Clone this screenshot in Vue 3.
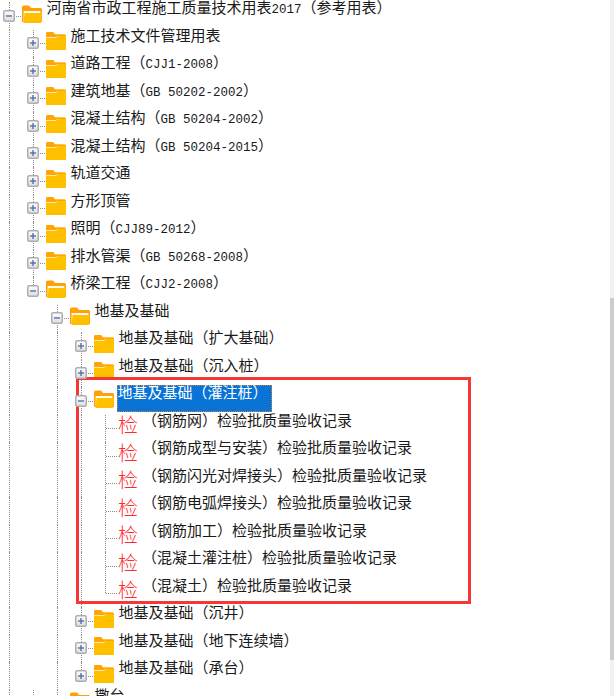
<script setup>
const nodes = [
  { t: '河南省市政工程施工质量技术用表2017（参考用表）', guides: [], toggle: 'minus', open: true, cont: true },
  ...[
    '施工技术文件管理用表', '道路工程（CJJ1-2008）', '建筑地基（GB 50202-2002）', '混凝土结构（GB 50204-2002）',
    '混凝土结构（GB 50204-2015）', '轨道交通', '方形顶管', '照明（CJJ89-2012）', '排水管渠（GB 50268-2008）'
  ].map(t => ({ t, guides: [1], toggle: 'plus', cont: true })),
  { t: '桥梁工程（CJJ2-2008）', guides: [1], toggle: 'minus', open: true, cont: false },
  { t: '地基及基础', guides: [1, 0], toggle: 'minus', open: true, cont: true },
  { t: '地基及基础（扩大基础）', guides: [1, 0, 1], toggle: 'plus', cont: true },
  { t: '地基及基础（沉入桩）', guides: [1, 0, 1], toggle: 'plus', cont: true },
  { t: '地基及基础（灌注桩）', guides: [1, 0, 1], toggle: 'minus', open: true, cont: true, selected: true },
  ...[
    '（钢筋网）检验批质量验收记录', '（钢筋成型与安装）检验批质量验收记录', '（钢筋闪光对焊接头）检验批质量验收记录',
    '（钢筋电弧焊接头）检验批质量验收记录', '（钢筋加工）检验批质量验收记录', '（混凝土灌注桩）检验批质量验收记录'
  ].map(t => ({ t, guides: [1, 0, 1, 1], leaf: true, cont: true })),
  { t: '（混凝土）检验批质量验收记录', guides: [1, 0, 1, 1], leaf: true, cont: false },
  { t: '地基及基础（沉井）', guides: [1, 0, 1], toggle: 'plus', cont: true },
  { t: '地基及基础（地下连续墙）', guides: [1, 0, 1], toggle: 'plus', cont: true },
  { t: '地基及基础（承台）', guides: [1, 0, 1], toggle: 'plus', cont: false },
  { t: '撒台', guides: [1, 1], open: true, cont: true }
]
const rows = nodes.map((n, i) => ({ ...n, id: i, parts: n.t.split(/([A-Za-z0-9 -]+)/).filter(Boolean).map(s => ({ s, latin: /^[A-Za-z0-9 -]+$/.test(s) })) }))
</script>

<template>
  <div class="page">
    <div class="tree">
      <div v-for="r in rows" :key="r.id" class="row">
        <span v-for="(g, i) in r.guides" :key="i" class="cell" :class="{ guide: g }"></span>
        <span class="cell node" :class="{ last: !r.cont }">
          <svg v-if="r.toggle" class="toggle" width="12" height="12" viewBox="0 0 12 12">
            <defs>
              <linearGradient :id="'g' + r.id" x1="0" y1="0" x2="0" y2="1">
                <stop offset="0" stop-color="#ffffff" />
                <stop offset="1" stop-color="#dcdcdc" />
              </linearGradient>
            </defs>
            <rect x=".75" y=".75" width="10.5" height="10.5" rx="1.5" :fill="'url(#g' + r.id + ')'" stroke="#adadad" stroke-width="1.5" />
            <path d="M3 6h6" stroke="#4a69ad" stroke-width="1.3" />
            <path v-if="r.toggle === 'plus'" d="M6 3v6" stroke="#4a69ad" stroke-width="1.3" />
          </svg>
        </span>
        <span v-if="r.leaf" class="leaf-icon">检</span>
        <svg v-else-if="r.open" class="folder" width="20" height="18" viewBox="0 0 20 18">
          <path d="M0 17V2.2Q0 .5 1.700 .5H7L9 3h9.500q1.500 0 1.500 1.500V17Z" fill="#ff9f0a" />
          <path d="M1.600 17V6h16.800v11Z" fill="#fffbe8" />
          <path d="M1.500 18 2.500 8h17.500l-1 10Z" fill="#ffc000" />
        </svg>
        <svg v-else class="folder" width="20" height="18" viewBox="0 0 20 18">
          <path d="M0 18V1.500Q0 0 1.500 0H7l2 2.500h9.500q1.500 0 1.500 1.500V18Z" fill="#ffc000" />
          <path d="M0 5.500h10l2-2.500h8" fill="none" stroke="#ffe9a8" stroke-width="1" />
          <path d="M0 1.500Q0 0 1.500 0H7l2 2.500h9.500q1.500 0 1.500 1.500H11L9.500 5H0Z" fill="#ffa50a" />
        </svg>
        <span class="label" :class="{ selected: r.selected, 'leaf-label': r.leaf }">
          <template v-for="(p, j) in r.parts" :key="j">
            <span v-if="p.latin" class="latin">{{ p.s }}</span>
            <template v-else>{{ p.s }}</template>
          </template>
        </span>
      </div>
    </div>
    <div class="callout"></div>
    <div class="scrollbar"><div class="thumb"></div></div>
  </div>
</template>

<style scoped>
.page {
  position: relative;
  width: 614px;
  height: 696px;
  overflow: hidden;
  background: #fff;
  font-family: "Noto Sans CJK SC", "Liberation Sans", sans-serif;
  font-size: 15px;
  color: #1a1a1a;
}
.tree {
  margin-left: -3px;
  padding-top: 2px;
}
.row {
  display: flex;
  align-items: center;
  height: 27.5px;
  white-space: nowrap;
}
.cell {
  position: relative;
  flex: none;
  align-self: stretch;
  width: 24px;
}
.guide::before,
.node::before {
  content: "";
  position: absolute;
  left: 12px;
  top: 0;
  bottom: 0;
  border-left: 1px dotted #8c8c8c;
}
.node.last::before {
  bottom: 50%;
}
.node::after {
  content: "";
  position: absolute;
  left: 13px;
  right: 0;
  top: 50%;
  border-top: 1px dotted #8c8c8c;
}
.toggle {
  position: absolute;
  left: 6px;
  top: 50%;
  margin-top: -6px;
  z-index: 1;
}
.folder {
  flex: none;
  margin-left: 1px;
  margin-top: -4px;
}
.label {
  box-sizing: border-box;
  align-self: flex-start;
  height: 27px;
  line-height: 11px;
  margin-top: -2px;
  margin-left: 2.500px;
  padding: 0 2px 0 1px;
  border: 1px dotted transparent;
}
.selected {
  color: #fff;
  background: #0a74d6;
  border-color: #c8873a;
  padding: 0 3px 0 0;
}
.leaf-label {
  margin-left: 2px;
}
.leaf-icon {
  flex: none;
  width: 20px;
  color: #ff2a2a;
  font-size: 20px;
  font-weight: 300;
  line-height: 20px;
  text-align: center;
  margin-top: -6px;
  margin-left: 1px;
}
.latin {
  font-family: "Liberation Mono", monospace;
  font-size: 12.500px;
  white-space: pre;
}
.callout {
  position: absolute;
  left: 76px;
  top: 377px;
  width: 395px;
  height: 227px;
  box-sizing: border-box;
  border: 3px solid #f73636;
  pointer-events: none;
}
.scrollbar {
  position: absolute;
  right: 0;
  top: 0;
  bottom: 0;
  width: 4px;
  background: #f1f1f1;
}
.thumb {
  margin-top: 298px;
  height: 362px;
  background: #cdcdcd;
}
</style>

<style>
html, body { margin: 0; background: #fff; }
</style>
